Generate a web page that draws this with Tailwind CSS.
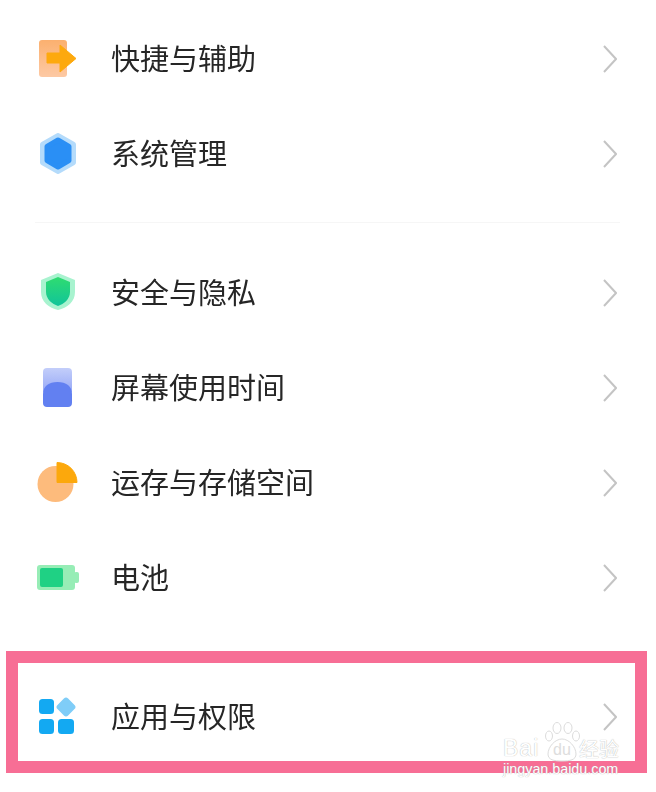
<!DOCTYPE html>
<html>

<head>
  <meta charset="UTF-8">
  <meta name="viewport" content="width=device-width, initial-scale=1.0">
  <script src="https://cdn.jsdelivr.net/npm/@tailwindcss/browser@4"></script>
</head>

<body class="bg-white">
  <div class="relative h-[792px] w-[656px] overflow-hidden bg-white pt-[11px] font-['Noto_Sans_CJK_SC','Noto_Sans',sans-serif] text-[29px] text-[#262626]">

    <div class="flex h-[95px] items-center pl-[36px] pr-[39px]">
      <svg class="h-[44px] w-[44px] shrink-0 blur-[0.5px]" viewBox="0 0 44 44">
        <defs>
          <linearGradient id="door" x1="0" y1="0" x2="0" y2="1"><stop offset="0" stop-color="#fbb06f"/><stop offset="1" stop-color="#fdc9a4"/></linearGradient>
        </defs>
        <rect x="3" y="3" width="28" height="37" rx="3" fill="url(#door)"/>
        <path d="M11 16H24V8L40 21.5L24 35V26H11Z" fill="#fda90e" stroke="#fda90e" stroke-width="1" stroke-linejoin="round"/>
      </svg>
      <span class="ml-[31px] flex-1 -translate-y-px blur-[0.3px]">快捷与辅助</span>
      <svg class="h-[28px] w-[14px] shrink-0 blur-[0.4px]" viewBox="0 0 14 28"><path d="M1 1L13 14L1 27" fill="none" stroke="#c4c4c4" stroke-width="2"/></svg>
    </div>

    <div class="flex h-[95px] items-center pl-[36px] pr-[39px]">
      <svg class="h-[44px] w-[44px] shrink-0 blur-[0.5px]" viewBox="0 0 44 44">
        <path d="M22 4L37 12.500V30.500L22 39L7 30.500V12.500Z" fill="#b4dbfb" stroke="#b4dbfb" stroke-width="6" stroke-linejoin="round"/>
        <path d="M22 8L33 14.500V28.500L22 35L11 28.500V14.500Z" fill="#2a8ff5" stroke="#2a8ff5" stroke-width="5" stroke-linejoin="round"/>
      </svg>
      <span class="ml-[31px] flex-1 -translate-y-px blur-[0.3px]">系统管理</span>
      <svg class="h-[28px] w-[14px] shrink-0 blur-[0.4px]" viewBox="0 0 14 28"><path d="M1 1L13 14L1 27" fill="none" stroke="#c4c4c4" stroke-width="2"/></svg>
    </div>

    <div class="flex h-[44px] items-center pb-[2px] pl-[35px] pr-[36px]">
      <div class="h-px w-full bg-[#f6f6f6]"></div>
    </div>

    <div class="flex h-[95px] items-center pl-[36px] pr-[39px]">
      <svg class="h-[44px] w-[44px] shrink-0 blur-[0.5px]" viewBox="0 0 44 44">
        <defs>
          <linearGradient id="shield" x1="0" y1="0" x2="0" y2="1"><stop offset="0" stop-color="#2fdc70"/><stop offset="1" stop-color="#10c49a"/></linearGradient>
        </defs>
        <path d="M22 2L39 9V21C39 31 31 37 22 39C13 37 5 31 5 21V9Z" fill="#a8f3cf"/>
        <path d="M22 6L34 11V21C34 28 28 33 22 35C16 33 10 28 10 21V11Z" fill="url(#shield)"/>
      </svg>
      <span class="ml-[31px] flex-1 -translate-y-px blur-[0.3px]">安全与隐私</span>
      <svg class="h-[28px] w-[14px] shrink-0 blur-[0.4px]" viewBox="0 0 14 28"><path d="M1 1L13 14L1 27" fill="none" stroke="#c4c4c4" stroke-width="2"/></svg>
    </div>

    <div class="flex h-[95px] items-center pl-[36px] pr-[39px]">
      <svg class="h-[44px] w-[44px] shrink-0 blur-[0.5px]" viewBox="0 0 44 44">
        <defs>
          <linearGradient id="glass" x1="0" y1="0" x2="0" y2="1"><stop offset="0" stop-color="#c3cefa"/><stop offset="1" stop-color="#93a5f6"/></linearGradient>
        </defs>
        <rect x="7" y="2" width="29" height="26" rx="4" fill="url(#glass)"/>
        <path d="M7 37V28C7 20 13 16 21.500 16C30 16 36 20 36 28V37C36 39.500 34.500 41 32 41H11C8.500 41 7 39.500 7 37Z" fill="#6280f1"/>
      </svg>
      <span class="ml-[31px] flex-1 -translate-y-px blur-[0.3px]">屏幕使用时间</span>
      <svg class="h-[28px] w-[14px] shrink-0 blur-[0.4px]" viewBox="0 0 14 28"><path d="M1 1L13 14L1 27" fill="none" stroke="#c4c4c4" stroke-width="2"/></svg>
    </div>

    <div class="flex h-[95px] items-center pl-[36px] pr-[39px]">
      <svg class="h-[44px] w-[44px] shrink-0 blur-[0.5px]" viewBox="0 0 44 44">
        <circle cx="19.500" cy="23" r="18" fill="#fdbb7c"/>
        <path d="M21 1.500A20 20 0 0 1 41 21.500H21Z" fill="#fca80c" stroke="#fca80c" stroke-width="1" stroke-linejoin="round"/>
      </svg>
      <span class="ml-[31px] flex-1 -translate-y-px blur-[0.3px]">运存与存储空间</span>
      <svg class="h-[28px] w-[14px] shrink-0 blur-[0.4px]" viewBox="0 0 14 28"><path d="M1 1L13 14L1 27" fill="none" stroke="#c4c4c4" stroke-width="2"/></svg>
    </div>

    <div class="flex h-[95px] items-center pl-[36px] pr-[39px]">
      <svg class="h-[44px] w-[44px] shrink-0 blur-[0.5px]" viewBox="0 0 44 44">
        <rect x="1" y="9" width="38" height="25" rx="3" fill="#97edb6"/>
        <rect x="38" y="16" width="5" height="11" rx="2" fill="#97edb6"/>
        <rect x="4" y="12" width="23" height="19" rx="2" fill="#1fd184"/>
      </svg>
      <span class="ml-[31px] flex-1 -translate-y-px blur-[0.3px]">电池</span>
      <svg class="h-[28px] w-[14px] shrink-0 blur-[0.4px]" viewBox="0 0 14 28"><path d="M1 1L13 14L1 27" fill="none" stroke="#c4c4c4" stroke-width="2"/></svg>
    </div>

    <div class="h-[44px]"></div>

    <div class="flex h-[95px] items-center pl-[36px] pr-[39px]">
      <svg class="h-[44px] w-[44px] shrink-0 blur-[0.5px]" viewBox="0 0 44 44">
        <rect x="3" y="4" width="15" height="15" rx="3.500" fill="#13a9f2"/>
        <rect x="3" y="24" width="15" height="15" rx="3.500" fill="#13a9f2"/>
        <rect x="22" y="24" width="16" height="15" rx="3.500" fill="#13a9f2"/>
        <rect x="22.500" y="4.500" width="15" height="15" rx="3" fill="#7fcdf8" transform="rotate(45 30 12)"/>
      </svg>
      <span class="ml-[31px] flex-1 -translate-y-px blur-[0.3px]">应用与权限</span>
      <svg class="h-[28px] w-[14px] shrink-0 blur-[0.4px]" viewBox="0 0 14 28"><path d="M1 1L13 14L1 27" fill="none" stroke="#c4c4c4" stroke-width="2"/></svg>
    </div>

    <!-- highlight frame drawn over the last row -->
    <div class="absolute left-[6px] top-[651px] h-[122px] w-[641px] border-[12px] border-[#f76e95]"></div>

    <!-- baidu watermark -->
    <div class="absolute left-[503px] top-[722px] h-[56px] w-[118px] font-['Liberation_Sans',sans-serif] text-white [text-shadow:0_0_1px_#a0a0a0]">
      <svg class="absolute left-[41px] top-0 h-[40px] w-[36px]" viewBox="0 0 36 40">
        <g fill="#ffffff" stroke="#dcdcdc" stroke-width="1">
          <ellipse cx="5" cy="14" rx="3.500" ry="5"/>
          <ellipse cx="13" cy="6" rx="4" ry="5.500"/>
          <ellipse cx="24" cy="6" rx="4" ry="5.500"/>
          <ellipse cx="32" cy="14" rx="3.500" ry="5"/>
          <path d="M4 32C4 25 11 17 18 17C25 17 32 25 32 32C32 38 26 39 18 39C10 39 4 38 4 32Z"/>
        </g>
      </svg>
      <span class="absolute left-0 top-[15px] text-[23px] leading-[22px] tracking-[1px]">Bai</span>
      <span class="absolute left-[50px] top-[20px] text-[16px] leading-[16px] text-[#dddddd] [text-shadow:none]">du</span>
      <span class="absolute left-[76px] top-[16px] font-['Noto_Sans_CJK_SC',sans-serif] text-[20px] leading-[22px]">经验</span>
      <span class="absolute left-0 top-[39px] text-[14.300px] leading-[16px] whitespace-nowrap">jingyan.baidu.com</span>
    </div>
  </div>
</body>

</html>
